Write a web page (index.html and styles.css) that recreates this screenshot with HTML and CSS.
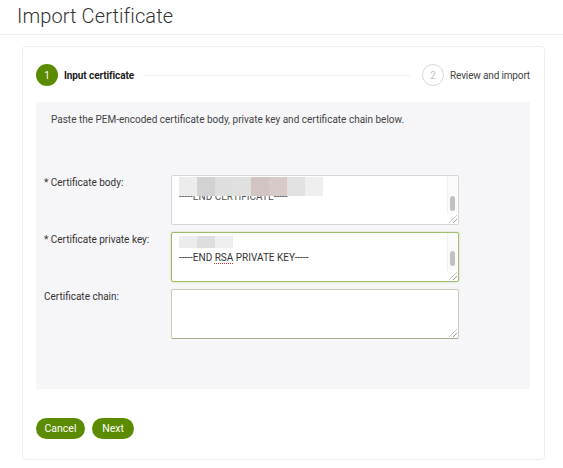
FILE: index.html
```html
<!DOCTYPE html>
<html>
<head>
<meta charset="utf-8">
<link rel="stylesheet" href="styles.css">
</head>
<body>
<div class="header"><h1 class="title">Import Certificate</h1></div>
<div class="card">
  <div class="stepper">
    <div class="step active"><span class="circle">1</span><span class="step-label">Input certificate</span></div>
    <div class="step-line"></div>
    <div class="step"><span class="circle outline">2</span><span class="step-label light">Review and import</span></div>
  </div>
  <div class="panel">
    <p class="intro">Paste the PEM-encoded certificate body, private key and certificate chain below.</p>
    <div class="form">
      <label class="label">* Certificate body:</label>
      <div class="area">
        <div class="cut-text">-----END CERTIFICATE-----</div>
        <div class="blur-row">
          <span class="bl b1"></span><span class="bl b2"></span><span class="bl b3"></span><span class="bl b4"></span><span class="bl b5"></span><span class="bl b6"></span><span class="bl b7"></span><span class="bl b8"></span>
        </div>
        <div class="scroll"><span class="thumb"></span></div>
        <span class="grip"></span>
      </div>

      <label class="label">* Certificate private key:</label>
      <div class="area focus">
        <div class="blur-row short">
          <span class="bl b1"></span><span class="bl b3"></span><span class="bl b8"></span>
        </div>
        <div class="key-text">-----END <span class="spell">RSA</span> PRIVATE KEY-----</div>
        <div class="scroll"><span class="thumb"></span></div>
        <span class="grip"></span>
      </div>

      <label class="label">Certificate chain:</label>
      <div class="area chain">
        <span class="grip"></span>
      </div>
    </div>
  </div>
  <div class="actions">
    <button class="btn btn-cancel">Cancel</button>
    <button class="btn btn-next">Next</button>
  </div>
</div>
</body>
</html>
```
FILE: styles.css
```css
* { box-sizing: border-box; }
html, body { margin: 0; padding: 0; background: #fff; }
body { font-family: Roboto, "Noto Sans", Arial, sans-serif; color: #333; width: 563px; height: 468px; overflow: hidden; }

.header { height: 35px; border-bottom: 1px solid #ececec; padding: 4px 0 0 17px; }
.title { margin: 0; font-size: 20px; font-weight: 300; color: #333; line-height: 24px; letter-spacing: 0.1px; }

.card {
  margin: 11px 18px 0 22px;
  height: 414px;
  border: 1px solid #efefef;
  border-radius: 4px;
  padding: 17px 14px 0 13px;
}

.stepper { display: flex; align-items: center; height: 22px; }
.step { display: flex; align-items: center; }
.circle {
  width: 22px; height: 22px; border-radius: 50%;
  background: #5b8b00; color: #fff;
  font-size: 10px; display: flex; align-items: center; justify-content: center;
}
.circle.outline { background: #fff; border: 1px solid #d8d8d8; color: #bbb; }
.step-label { margin-left: 6px; font-size: 10px; font-weight: 700; color: #222; letter-spacing: -0.1px; }
.step-label.light { font-weight: 400; color: #444; font-size: 10px; letter-spacing: -0.15px; }
.step-line { flex: 1; height: 1px; background: #efefef; margin: 0 12px 0 10px; }

.panel {
  margin-top: 16px;
  height: 287px;
  background: #f6f5f8;
  border-radius: 2px;
  padding: 11px 0 0 8px;
}
.intro { margin: 0 0 0 7px; font-size: 10px; color: #444; line-height: 14px; }

.form {
  margin-top: 48px;
  display: grid;
  grid-template-columns: 127px 288px;
  row-gap: 7px;
}
.label { font-size: 10px; color: #333; padding-top: 2px; }

.area {
  position: relative;
  height: 50px;
  background: #fff;
  border: 1px solid #d6d6d6;
  border-radius: 2px;
  overflow: hidden;
  padding: 1px 0 0 7px;
  font-size: 10px;
  color: #333;
}
.area.focus { border-color: #9fbd6a; box-shadow: 0 0 2px rgba(140,180,80,0.5); padding-top: 3px; }
.area.chain { border-color: #c7cfae; border-bottom-color: #a9ae8f; }

.blur-row { display: flex; height: 19px; }
.area > .cut-text + .blur-row { position: absolute; left: 7px; top: 1px; }
.blur-row.short { height: 12px; }
.bl { display: block; width: 18px; height: 100%; }
.b1 { background: #ececec; }
.b2 { background: #d2d2d2; }
.b3 { background: #dedede; }
.b4 { background: #e0e0e0; }
.b5 { background: #d3c4c4; }
.b6 { background: #d9caca; }
.b7 { background: #e1e1e1; }
.b8 { background: #efefef; }
.cut-text { margin-top: 15px; line-height: 10px; color: #555; }
.key-text { margin-top: 4px; line-height: 12px; }
.spell { text-decoration: underline dotted #e03030; text-underline-offset: 2px; }

.scroll { position: absolute; right: 1px; top: 0; bottom: 10px; width: 10px; background: #fafafa; border-left: 1px solid #f0f0f0; }
.thumb { position: absolute; left: 2px; top: 20px; width: 5px; height: 15px; border-radius: 3px; background: #c1c1c1; }
.area.focus .thumb { top: 18px; }
.grip {
  position: absolute; right: 1px; bottom: 1px; width: 8px; height: 8px;
  background: repeating-linear-gradient(135deg, transparent 0 2px, #999 2px 3px);
  clip-path: polygon(100% 0, 100% 100%, 0 100%);
}

.actions { margin-top: 29px; display: flex; gap: 7px; }
.btn {
  height: 21px; border: none; border-radius: 11px;
  background: #5b8b00; color: #fff;
  font-family: Roboto, "Noto Sans", Arial, sans-serif; font-size: 10.5px; font-weight: 400;
  padding: 0;
}
.btn-cancel { width: 49px; }
.btn-next { width: 42px; }
```
